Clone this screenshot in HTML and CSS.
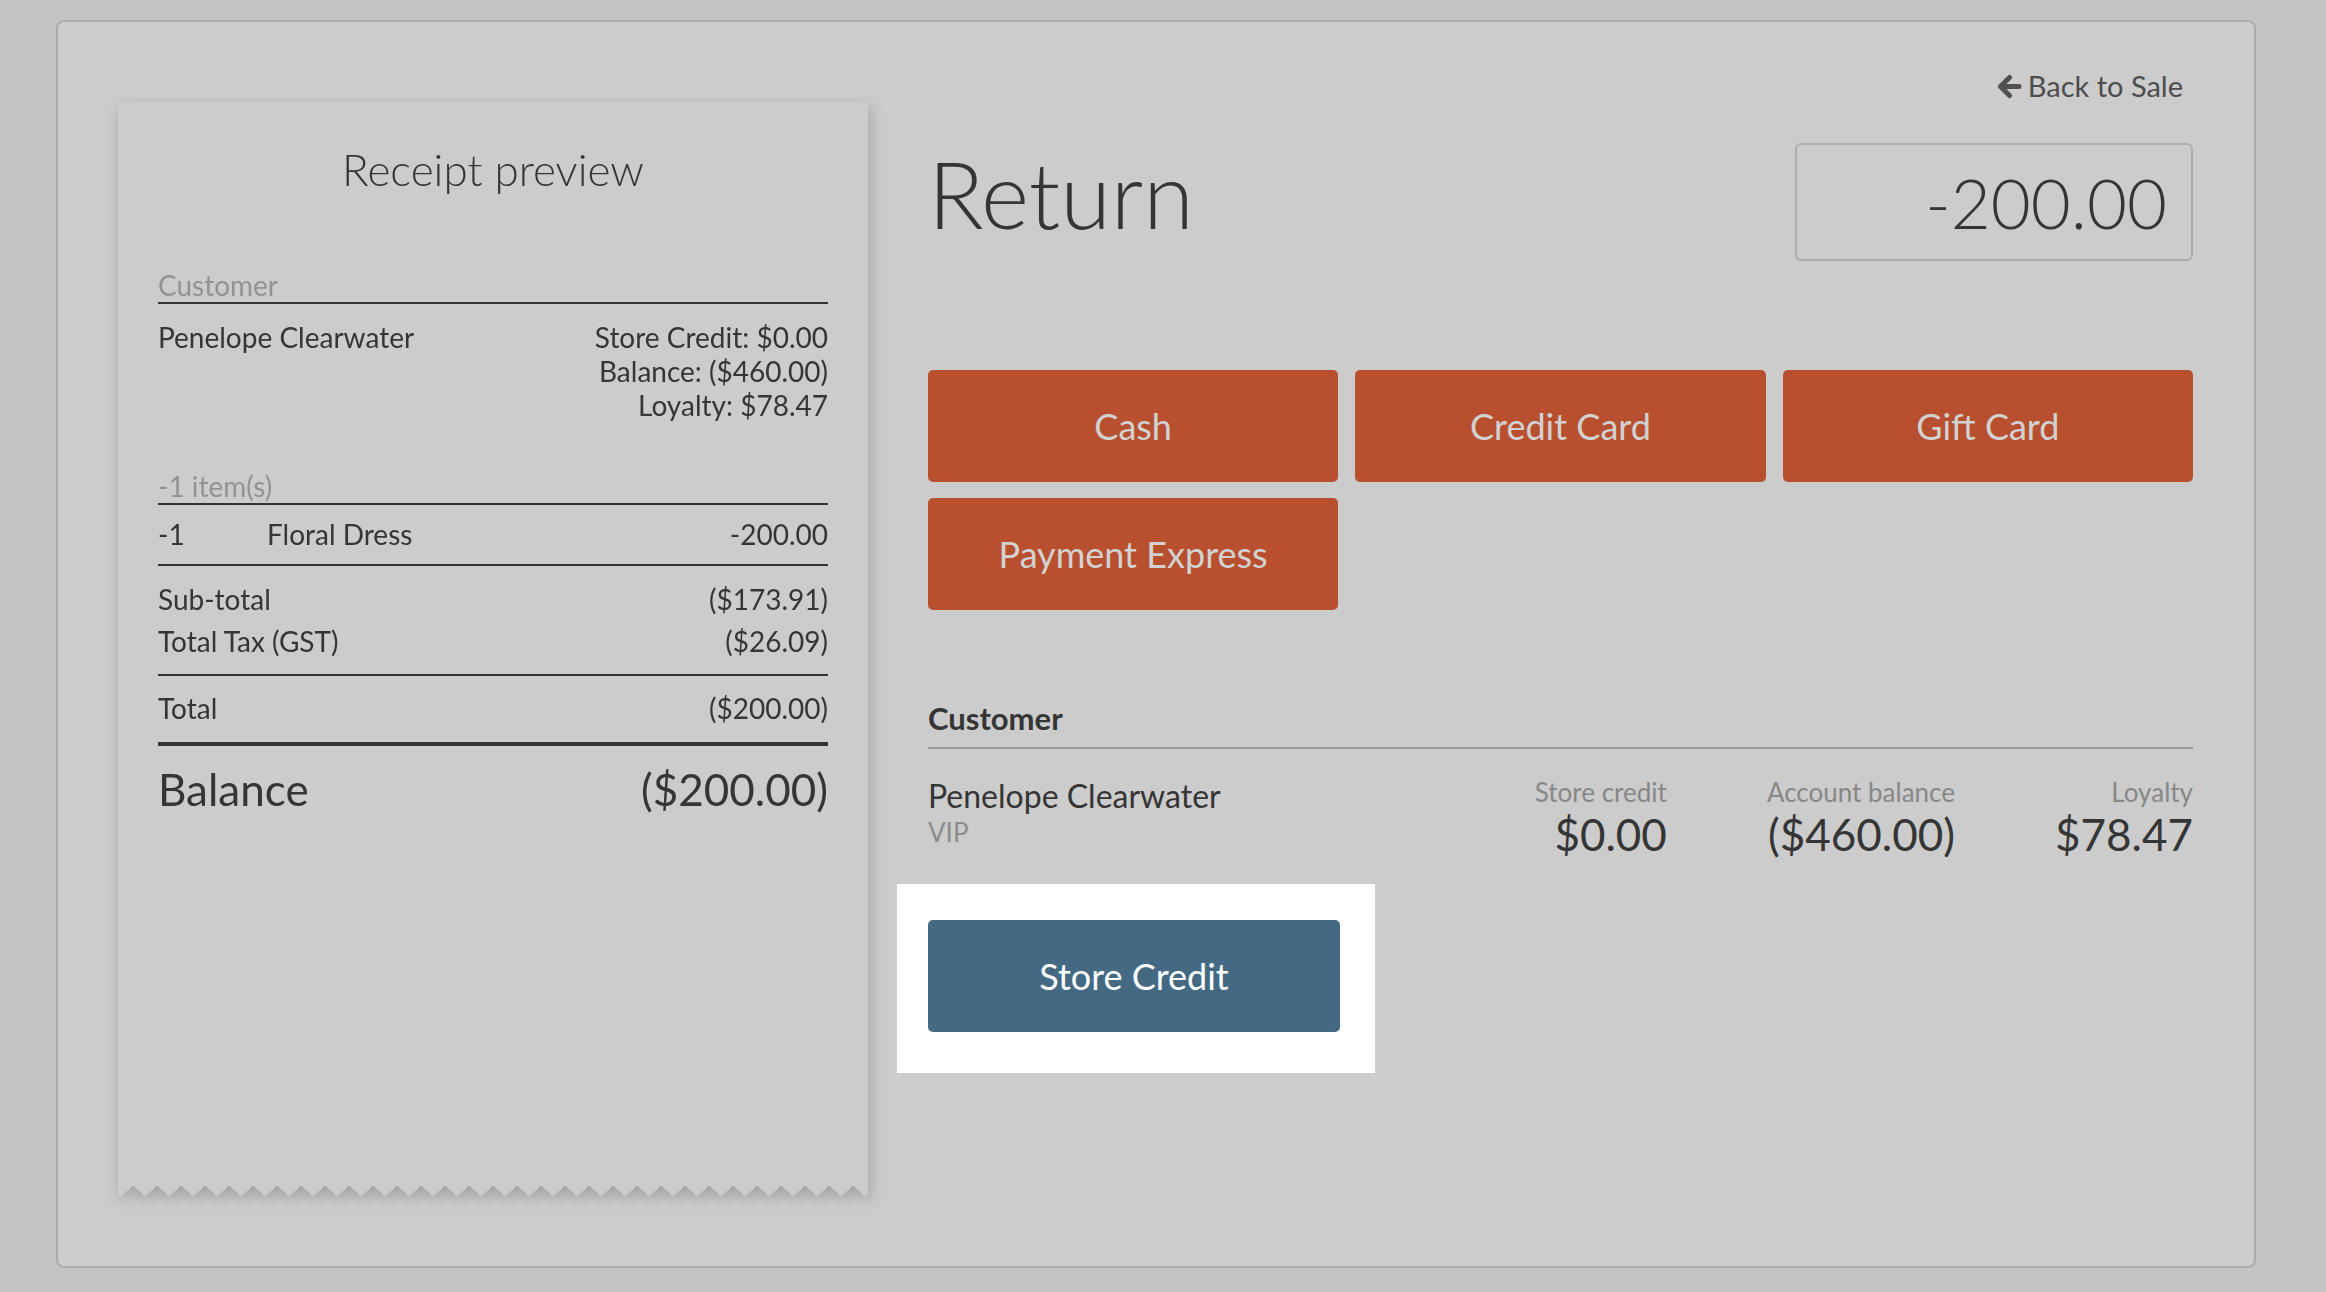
FILE: index.html
```html
<!DOCTYPE html>
<html lang="en">
<head>
<meta charset="utf-8">
<title>Return</title>
<link rel="stylesheet" href="styles.css">
</head>
<body>
<div class="panel">
  <div class="receipt-wrap">
    <div class="receipt">
      <h2 class="receipt-title">Receipt preview</h2>
      <div class="r-label">Customer</div>
      <div class="r-customer">
        <div>Penelope Clearwater</div>
        <div class="r-right">Store Credit: $0.00<br>Balance: ($460.00)<br>Loyalty: $78.47</div>
      </div>
      <div class="r-label r-items-label">-1 item(s)</div>
      <div class="r-item">
        <span class="r-qty">-1</span>
        <span class="r-name">Floral Dress</span>
        <span class="r-amt">-200.00</span>
      </div>
      <div class="r-totals">
        <div class="r-row"><span>Sub-total</span><span>($173.91)</span></div>
        <div class="r-row r-tax"><span>Total Tax (GST)</span><span>($26.09)</span></div>
      </div>
      <div class="r-row r-total"><span>Total</span><span>($200.00)</span></div>
      <div class="r-row r-balance"><span>Balance</span><span>($200.00)</span></div>
    </div>
  </div>

  <div class="main">
    <div class="back-row">
      <a class="back-link" href="#">
        <svg class="back-icon" width="25" height="25" viewBox="0 0 25 25" aria-hidden="true">
          <path d="M22 12.5H4.5M12.5 3.5L3.5 12.5L12.5 21.5" fill="none" stroke="#505050" stroke-width="5" stroke-linecap="round" stroke-linejoin="round"/>
        </svg>Back to Sale
      </a>
    </div>

    <div class="header-row">
      <h1 class="title">Return</h1>
      <div class="amount">-200.00</div>
    </div>

    <div class="pay-grid">
      <button class="pay-btn">Cash</button>
      <button class="pay-btn">Credit Card</button>
      <button class="pay-btn">Gift Card</button>
      <button class="pay-btn">Payment Express</button>
    </div>

    <div class="cust-heading">Customer</div>
    <div class="cust-row">
      <div class="cust-name">
        <div class="cust-fullname">Penelope Clearwater</div>
        <div class="cust-group">VIP</div>
      </div>
      <div class="stats">
        <div class="stat">
          <div class="stat-label">Store credit</div>
          <div class="stat-value">$0.00</div>
        </div>
        <div class="stat">
          <div class="stat-label">Account balance</div>
          <div class="stat-value">($460.00)</div>
        </div>
        <div class="stat">
          <div class="stat-label">Loyalty</div>
          <div class="stat-value">$78.47</div>
        </div>
      </div>
    </div>

    <div class="spotlight">
      <button class="store-btn">Store Credit</button>
    </div>
  </div>
</div>
</body>
</html>
```

FILE: styles.css
```css
body {
  margin: 0;
  background: #c3c3c3;
  font-family: Lato, "Open Sans", sans-serif;
  color: #353535;
}

.panel {
  box-sizing: border-box;
  width: 2200px;
  height: 1248px;
  margin: 20px 0 0 56px;
  border: 2px solid #ababab;
  border-radius: 8px;
  background: #cccccc;
  display: flex;
  align-items: flex-start;
  gap: 60px;
  padding: 0 61px 0 60px;
}

/* Receipt */
.receipt-wrap {
  flex: none;
  width: 750px;
  margin-top: 80px;
  filter: drop-shadow(2px 5px 7px rgba(0, 0, 0, 0.2));
}

.receipt {
  position: relative;
  box-sizing: border-box;
  height: 1084px;
  background: #cccccc;
  padding: 41px 40px 0;
  font-size: 28px;
  line-height: 34px;
}

.receipt::after {
  content: "";
  position: absolute;
  left: 0;
  right: 0;
  top: 100%;
  height: 10px;
  background: conic-gradient(from -50.2deg at 50% 100%, #cccccc 0 100.4deg, transparent 0);
  background-size: 24px 10px;
  background-position: 15px 0;
}

.receipt-title {
  margin: 0;
  font-weight: 300;
  font-size: 44px;
  line-height: 52px;
  text-align: center;
  color: #353535;
}

.r-label {
  margin-top: 73px;
  color: #939393;
  border-bottom: 2px solid #333;
}

.r-customer {
  display: flex;
  justify-content: space-between;
  margin-top: 16px;
}

.r-right {
  text-align: right;
}

.r-items-label {
  margin-top: 47px;
}

.r-item {
  display: flex;
  margin-top: 12px;
  padding-bottom: 13px;
  border-bottom: 2px solid #333;
}

.r-qty {
  width: 109px;
}

.r-name {
  flex: 1;
}

.r-totals {
  padding: 16px 0;
  border-bottom: 2px solid #333;
}

.r-row {
  display: flex;
  justify-content: space-between;
}

.r-tax {
  margin-top: 8px;
}

.r-total {
  padding: 15px 0 17px;
  border-bottom: 4px solid #333;
}

.r-balance {
  margin-top: 17px;
  font-size: 44px;
  line-height: 52px;
}

/* Main column */
.main {
  flex: 1;
  padding-top: 47px;
}

.back-row {
  display: flex;
  justify-content: flex-end;
  padding-right: 10px;
  font-size: 29px;
  line-height: 34px;
}

.back-link {
  display: flex;
  align-items: center;
  color: #4d4d4d;
  text-decoration: none;
}

.back-icon {
  margin-right: 6px;
}

.header-row {
  display: flex;
  justify-content: space-between;
  align-items: flex-start;
  margin-top: 40px;
}

.title {
  margin: 5px 0 0;
  font-weight: 300;
  font-size: 92px;
  line-height: 92px;
  color: #353535;
}

.amount {
  box-sizing: border-box;
  width: 398px;
  height: 118px;
  border: 2px solid #adadad;
  border-radius: 6px;
  display: flex;
  align-items: center;
  justify-content: flex-end;
  padding-right: 24px;
  font-size: 69px;
  font-weight: 300;
  color: #353535;
}

.pay-grid {
  display: grid;
  grid-template-columns: repeat(3, 1fr);
  gap: 16px 17px;
  margin-top: 109px;
}

.pay-btn {
  height: 112px;
  border: none;
  border-radius: 5px;
  background: #b8502f;
  color: #d2d2d2;
  font-family: Lato, "Open Sans", sans-serif;
  font-size: 36px;
  padding: 0;
}

.cust-heading {
  margin-top: 91px;
  font-weight: 700;
  font-size: 31px;
  line-height: 34px;
  padding-bottom: 12px;
  border-bottom: 2px solid #999;
}

.cust-row {
  display: flex;
  align-items: flex-start;
  margin-top: 28px;
}

.cust-name {
  flex: 1;
}

.cust-fullname {
  font-size: 32px;
  line-height: 38px;
}

.cust-group {
  font-size: 26px;
  line-height: 34px;
  color: #8c8c8c;
}

.stats {
  display: flex;
  gap: 100px;
}

.stat {
  text-align: right;
}

.stat-label {
  font-size: 26px;
  line-height: 30px;
  color: #878787;
}

.stat-value {
  font-size: 44px;
  line-height: 54px;
}

.spotlight {
  width: fit-content;
  margin: 23px 0 0 -31px;
  padding: 36px 35px 41px 31px;
  background: #ffffff;
}

.store-btn {
  display: block;
  width: 412px;
  height: 112px;
  border: none;
  border-radius: 5px;
  background: #436a82;
  color: #ffffff;
  font-family: Lato, "Open Sans", sans-serif;
  font-size: 36px;
  padding: 0;
}
```
